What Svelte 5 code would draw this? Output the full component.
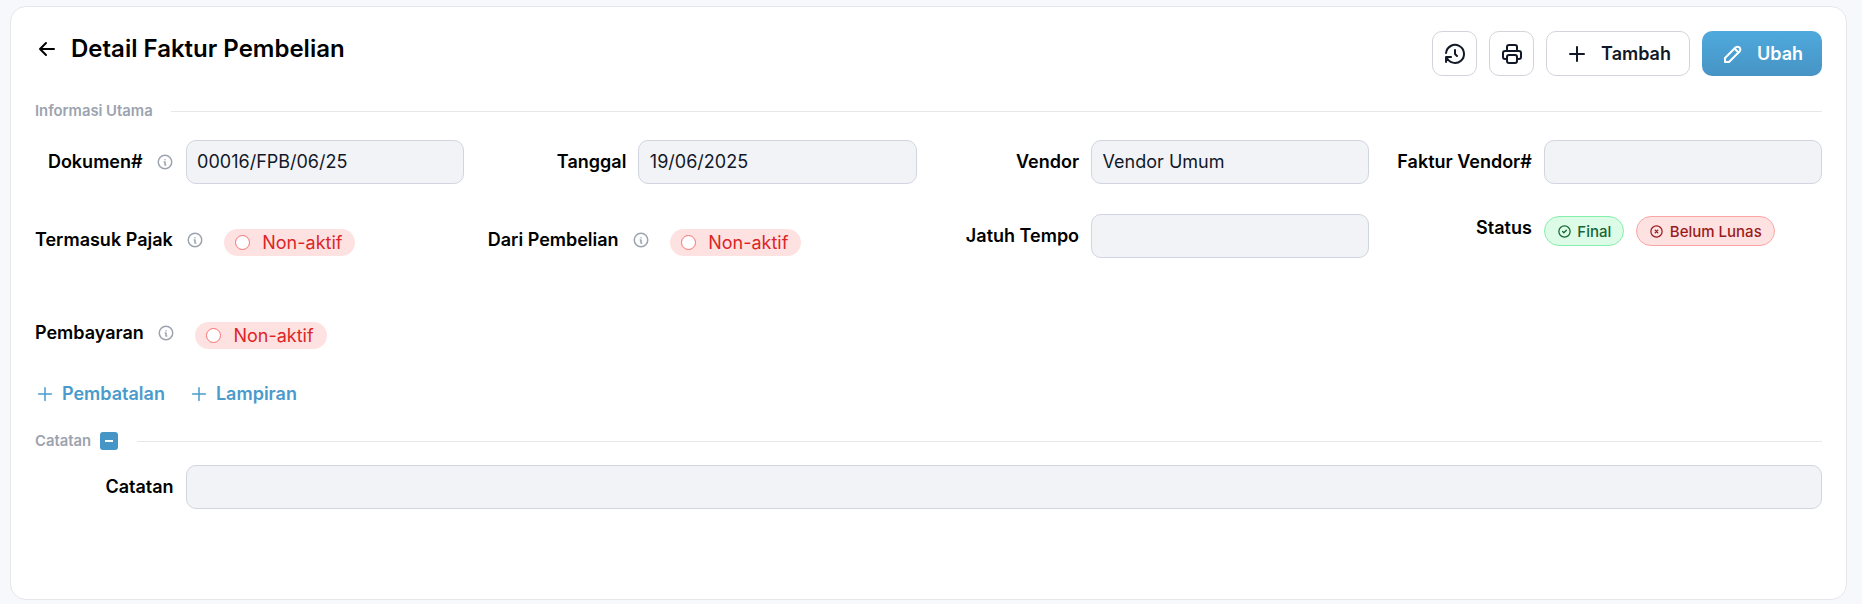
<script>
  const inputs = [
    { label: "Dokumen#", value: "00016/FPB/06/25", info: true },
    { label: "Tanggal", value: "19/06/2025" },
    { label: "Vendor", value: "Vendor Umum" },
    { label: "Faktur Vendor#", value: "" }
  ];
</script>

{#snippet info()}
  <svg class="info" viewBox="0 0 24 24" fill="none" stroke="currentColor" stroke-width="2" stroke-linecap="round" stroke-linejoin="round">
    <path d="M3 12a9 9 0 1 0 18 0a9 9 0 1 0 -18 0" />
    <path d="M12 9h.01M11 12h1v4h1" />
  </svg>
{/snippet}

{#snippet toggle()}
  <span class="toggle"><span class="dot"></span>Non-aktif</span>
{/snippet}

<div class="card">
  <header>
    <div class="title">
      <svg class="back" viewBox="0 0 24 24" fill="none" stroke="currentColor" stroke-width="2" stroke-linecap="round" stroke-linejoin="round">
        <path d="M5 12h14M5 12l6 6M5 12l6-6" />
      </svg>
      <h1>Detail Faktur Pembelian</h1>
    </div>
    <div class="actions">
      <button class="btn square" aria-label="Riwayat">
        <svg viewBox="0 0 24 24" fill="none" stroke="currentColor" stroke-width="2" stroke-linecap="round" stroke-linejoin="round">
          <path d="M12 8v4l2 2" />
          <path d="M3.05 11a9 9 0 1 1 .5 4m-.5 5v-5h5" />
        </svg>
      </button>
      <button class="btn square" aria-label="Cetak">
        <svg viewBox="0 0 24 24" fill="none" stroke="currentColor" stroke-width="2" stroke-linecap="round" stroke-linejoin="round">
          <path d="M17 17h2a2 2 0 0 0 2-2v-4a2 2 0 0 0-2-2H5a2 2 0 0 0-2 2v4a2 2 0 0 0 2 2h2" />
          <path d="M17 9V5a2 2 0 0 0-2-2H9a2 2 0 0 0-2 2v4" />
          <rect x="7" y="13" width="10" height="8" rx="2" />
        </svg>
      </button>
      <button class="btn tambah">
        <svg viewBox="0 0 24 24" fill="none" stroke="currentColor" stroke-width="2" stroke-linecap="round"><path d="M12 5v14M5 12h14" /></svg>
        Tambah
      </button>
      <button class="btn ubah">
        <svg viewBox="0 0 24 24" fill="none" stroke="currentColor" stroke-width="2" stroke-linecap="round" stroke-linejoin="round">
          <path d="M4 20h4L18.5 9.5a2.828 2.828 0 1 0-4-4L4 16v4" />
          <path d="m13.5 6.5 4 4" />
        </svg>
        Ubah
      </button>
    </div>
  </header>

  <div class="section first"><span>Informasi Utama</span><hr /></div>

  <div class="grid">
    {#each inputs as f}
      <div class="field">
        <div class="label">
          {f.label}
          {#if f.info}{@render info()}{/if}
        </div>
        <div class="input">{f.value}</div>
      </div>
    {/each}

    <div class="inline">
      <span class="label-auto">Termasuk Pajak {@render info()}</span>
      {@render toggle()}
    </div>
    <div class="inline">
      <span class="label-auto">Dari Pembelian {@render info()}</span>
      {@render toggle()}
    </div>
    <div class="field top">
      <div class="label">Jatuh Tempo</div>
      <div class="input"></div>
    </div>
    <div class="field status">
      <div class="label">Status</div>
      <div class="badges">
        <span class="badge green">
          <svg viewBox="0 0 24 24" fill="none" stroke="currentColor" stroke-width="2" stroke-linecap="round" stroke-linejoin="round"><path d="M3 12a9 9 0 1 0 18 0a9 9 0 1 0 -18 0" /><path d="m9 12 2 2 4-4" /></svg>
          Final
        </span>
        <span class="badge red">
          <svg viewBox="0 0 24 24" fill="none" stroke="currentColor" stroke-width="2" stroke-linecap="round" stroke-linejoin="round"><path d="M3 12a9 9 0 1 0 18 0a9 9 0 1 0 -18 0" /><path d="m10 10 4 4m0-4-4 4" /></svg>
          Belum Lunas
        </span>
      </div>
    </div>

    <div class="inline">
      <span class="label-auto">Pembayaran {@render info()}</span>
      {@render toggle()}
    </div>
  </div>

  <div class="links">
    <span class="link">
      <svg viewBox="0 0 24 24" fill="none" stroke="currentColor" stroke-width="2" stroke-linecap="round"><path d="M3.5 12h17M12 3.5v17" /></svg>
      Pembatalan
    </span>
    <span class="link">
      <svg viewBox="0 0 24 24" fill="none" stroke="currentColor" stroke-width="2" stroke-linecap="round"><path d="M3.5 12h17M12 3.5v17" /></svg>
      Lampiran
    </span>
  </div>

  <div class="section second">
    <span>Catatan</span>
    <span class="collapse"></span>
    <hr />
  </div>

  <div class="field full">
    <div class="label">Catatan</div>
    <div class="input"></div>
  </div>
</div>

<style>
  :global(body) {
    background: #f7f8fb;
    font-family: Inter, "Noto Sans", sans-serif;
    color: #000;
  }

  .card {
    box-sizing: border-box;
    width: 1837px;
    height: 594px;
    margin: 6px 0 0 10px;
    padding: 24px 24px 0 24px;
    background: #fff;
    border: 1px solid #e5e7eb;
    border-radius: 16px;
  }

  header {
    display: flex;
    justify-content: space-between;
    align-items: flex-start;
  }

  .title {
    display: flex;
    align-items: center;
    gap: 12px;
    height: 36px;
  }

  .back {
    width: 24px;
    height: 24px;
  }

  h1 {
    margin: 0;
    font-size: 24px;
    font-weight: 600;
    line-height: 36px;
  }

  .actions {
    display: flex;
    gap: 12px;
  }

  .btn {
    display: flex;
    align-items: center;
    justify-content: center;
    box-sizing: border-box;
    height: 45px;
    background: #fff;
    border: 1px solid #d1d5db;
    border-radius: 10px;
    font: 600 18px Inter, sans-serif;
    color: #111827;
    padding: 0;
  }

  .btn svg {
    width: 24px;
    height: 24px;
  }

  .square {
    width: 45px;
  }

  .tambah {
    width: 144px;
    gap: 12px;
  }

  .ubah {
    width: 120px;
    gap: 12px;
    color: #fff;
    border: none;
    background: linear-gradient(#4fa9dd, #4694c4);
  }

  .section {
    display: flex;
    align-items: center;
    font-size: 14.8px;
    font-weight: 600;
    color: #9ca3af;
    line-height: 20px;
  }

  .section hr {
    flex: 1;
    margin: 0;
    border: none;
    border-top: 1px solid #e5e7eb;
  }

  .first {
    margin-top: 25px;
    gap: 18px;
  }

  .second {
    margin-top: 25px;
  }

  .collapse {
    position: relative;
    width: 18px;
    height: 18px;
    margin: 0 19px 0 9px;
    background: #4596c6;
    border-radius: 3px;
  }

  .collapse::after {
    content: "";
    position: absolute;
    left: 5px;
    top: 8px;
    width: 8px;
    height: 2px;
    background: #fff;
  }

  .grid {
    display: grid;
    grid-template-columns: repeat(4, 1fr);
    column-gap: 24px;
    grid-template-rows: 44px 63px auto;
    row-gap: 30px;
    margin-top: 19px;
  }

  .field {
    display: grid;
    grid-template-columns: 138.6px 1fr;
    column-gap: 12px;
    align-items: center;
  }

  .top {
    align-items: start;
  }

  .top .label {
    line-height: 44px;
  }

  .label {
    display: flex;
    align-items: center;
    justify-content: flex-end;
    gap: 13px;
    font-size: 18px;
    font-weight: 600;
    line-height: 24px;
    white-space: nowrap;
  }

  .input {
    box-sizing: border-box;
    height: 44px;
    padding: 0 10.5px;
    background: #f2f3f7;
    border: 1px solid #d1d5e0;
    border-radius: 10px;
    font-size: 18px;
    line-height: 42px;
    color: #111827;
  }

  .info {
    width: 18px;
    height: 18px;
    color: #9ca3af;
    flex: none;
  }

  .inline {
    display: flex;
    align-items: center;
    height: 27px;
    padding-top: 15px;
    gap: 20.5px;
  }

  .label-auto {
    display: inline-flex;
    align-items: center;
    gap: 13px;
    font-size: 18px;
    font-weight: 600;
    line-height: 24px;
    white-space: nowrap;
    margin-top: -5px;
  }

  .toggle {
    display: inline-flex;
    align-items: center;
    gap: 12px;
    height: 27px;
    padding: 0 13px 0 11px;
    background: #fee2e2;
    border-radius: 14px;
    font-size: 18px;
    color: #dc2626;
  }

  .dot {
    box-sizing: border-box;
    width: 15px;
    height: 15px;
    background: #fff;
    border: 1.5px solid #f87171;
    border-radius: 50%;
  }

  .status {
    align-items: start;
    padding-top: 2px;
  }

  .badges {
    display: flex;
    gap: 12px;
  }

  .badge {
    display: inline-flex;
    align-items: center;
    gap: 5.5px;
    box-sizing: border-box;
    height: 30px;
    padding: 0 12px;
    border: 1px solid;
    border-radius: 15px;
    font-size: 15px;
    font-weight: 500;
  }

  .badge svg {
    width: 15px;
    height: 15px;
  }

  .green {
    background: #dcfce7;
    border-color: #86efac;
    color: #166534;
  }

  .red {
    background: #fee2e2;
    border-color: #fca5a5;
    color: #991b1b;
  }

  .links {
    display: flex;
    gap: 25px;
    margin-top: 33px;
    padding-left: 1px;
  }

  .link {
    display: inline-flex;
    align-items: center;
    gap: 8px;
    font-size: 18px;
    font-weight: 600;
    line-height: 24px;
    color: #4a9bcb;
  }

  .link svg {
    width: 18px;
    height: 18px;
  }

  .full {
    margin-top: 14px;
  }
</style>
